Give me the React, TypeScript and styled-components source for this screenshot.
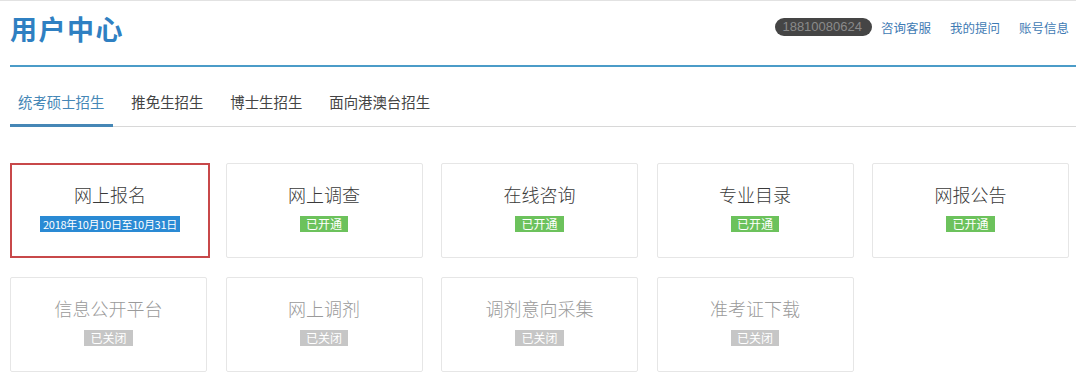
import React from "react";
import styled, { createGlobalStyle, css } from "styled-components";

type Status = "date" | "open" | "closed";

type Entry = {
  title: string;
  status: Status;
  label: string;
  highlight?: boolean;
};

const entries: Entry[] = [
  { title: "网上报名", status: "date", label: "2018年10月10日至10月31日", highlight: true },
  { title: "网上调查", status: "open", label: "已开通" },
  { title: "在线咨询", status: "open", label: "已开通" },
  { title: "专业目录", status: "open", label: "已开通" },
  { title: "网报公告", status: "open", label: "已开通" },
  { title: "信息公开平台", status: "closed", label: "已关闭" },
  { title: "网上调剂", status: "closed", label: "已关闭" },
  { title: "调剂意向采集", status: "closed", label: "已关闭" },
  { title: "准考证下载", status: "closed", label: "已关闭" },
];

const tabs = ["统考硕士招生", "推免生招生", "博士生招生", "面向港澳台招生"];

const App = () => {
  return (
    <>
      <GlobalStyle />
      <Page>
        <Header>
          <Title>用户中心</Title>
          <UserBar>
            <Phone>18810080624</Phone>
            <UserLink>咨询客服</UserLink>
            <UserLink>我的提问</UserLink>
            <UserLink>账号信息</UserLink>
          </UserBar>
        </Header>
        <Tabs>
          {tabs.map((t, i) => (
            <Tab key={t} active={i === 0}>
              {t}
            </Tab>
          ))}
        </Tabs>
        <Grid>
          {entries.map((e) => (
            <Card key={e.title} highlight={e.highlight}>
              <CardTitle disabled={e.status === "closed"}>{e.title}</CardTitle>
              <Badge status={e.status}>{e.label}</Badge>
            </Card>
          ))}
        </Grid>
      </Page>
    </>
  );
};

const GlobalStyle = createGlobalStyle`
  body {
    margin: 0;
    background: #fff;
    font-family: "Noto Sans CJK SC", "Noto Sans", "Liberation Sans", sans-serif;
  }
`;

const Page = styled.div`
  width: 1066px;
  padding: 0 0 0 10px;
  border-top: 1px solid #e2e2e2;
`;

const Header = styled.div`
  height: 64px;
  display: flex;
  align-items: center;
  justify-content: space-between;
  border-bottom: 2px solid #4b9cc8;
`;

const Title = styled.h1`
  margin: 0 0 10px 0;
  font-size: 27px;
  font-weight: 700;
  color: #2f80c2;
  letter-spacing: 1.5px;
`;

const UserBar = styled.div`
  display: flex;
  align-items: center;
  gap: 19px;
  margin: 0 7px 12px 0;
`;

const Phone = styled.span`
  background: #454545;
  color: #8a8a8a;
  font-family: "Liberation Sans", sans-serif;
  font-size: 13px;
  line-height: 18px;
  padding: 0 10px 0 7px;
  border-radius: 9px;
  margin-right: -10px;
`;

const UserLink = styled.span`
  font-size: 12.5px;
  color: #3f7bb4;
`;

const Tabs = styled.div`
  display: flex;
  margin-top: 20px;
  border-bottom: 1px solid #d8d8d8;
`;

const Tab = styled.div<{ active?: boolean }>`
  font-size: 14.4px;
  padding: 4px 9px 12px 8px;
  margin-right: 10px;
  color: #444;
  margin-bottom: -1px;
  border-bottom: 3px solid transparent;
  ${({ active }) =>
    active &&
    css`
      color: #4687b6;
      border-bottom-color: #4687b6;
    `}
`;

const Grid = styled.div`
  display: grid;
  grid-template-columns: repeat(5, 197px);
  column-gap: 18.5px;
  row-gap: 19px;
  margin-top: 36px;
`;

const Card = styled.div<{ highlight?: boolean }>`
  height: 95px;
  box-sizing: border-box;
  border: 1px solid #e6e6e6;
  border-radius: 2px;
  display: flex;
  flex-direction: column;
  align-items: center;
  padding-top: 19px;
  ${({ highlight }) =>
    highlight &&
    css`
      border: 2px solid #c8484a;
      border-radius: 0;
      width: 200px;
      padding-top: 18px;
    `}
`;

const CardTitle = styled.div<{ disabled?: boolean }>`
  font-size: 18px;
  font-weight: 300;
  line-height: 22px;
  color: ${({ disabled }) => (disabled ? "#9a9a9a" : "#3a3a3a")};
`;

const Badge = styled.span<{ status: Status }>`
  margin-top: 11px;
  font-size: ${({ status }) => (status === "date" ? "11px" : "12px")};
  line-height: 16px;
  padding: ${({ status }) => (status === "date" ? "0 3px" : "0 6px")};
  letter-spacing: ${({ status }) => (status === "date" ? "-0.3px" : "0")};
  color: #fff;
  background: ${({ status }) =>
    status === "date" ? "#2a8ad4" : status === "open" ? "#6cc25c" : "#c6c6c6"};
`;

export default App;
